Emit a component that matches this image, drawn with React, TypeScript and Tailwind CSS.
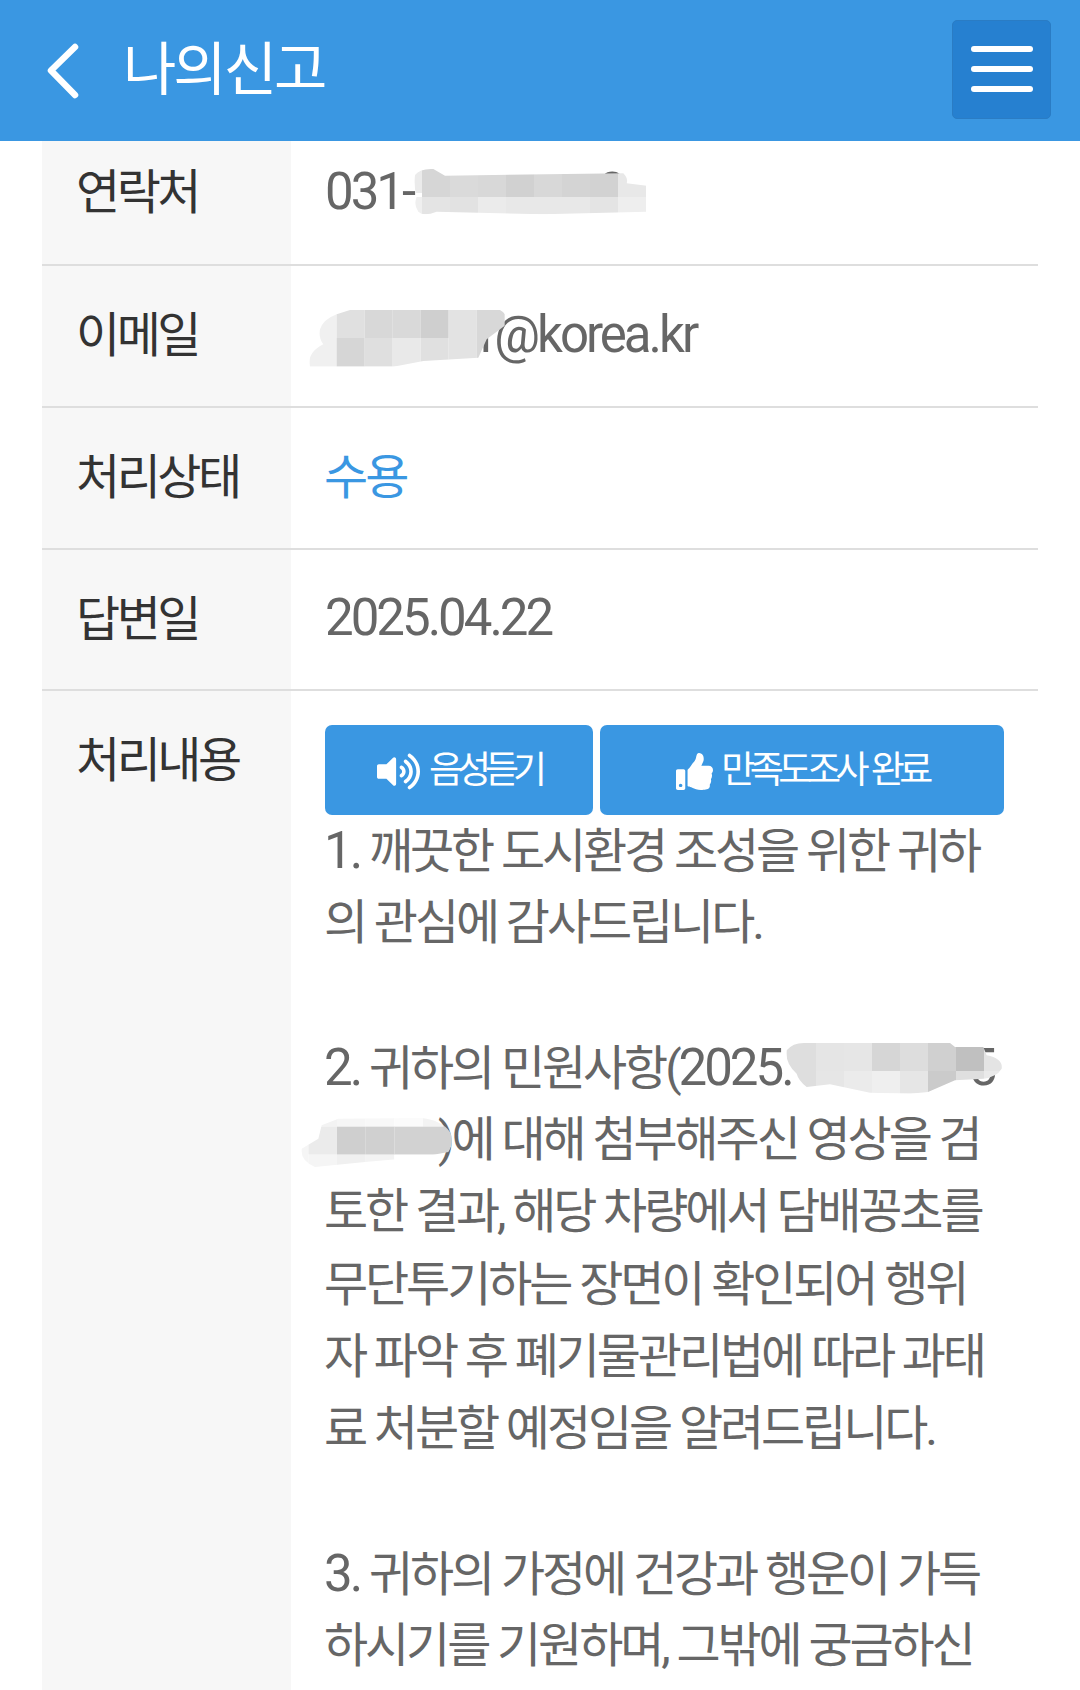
import type { ReactNode } from "react";
import { FaThumbsUp, FaVolumeUp } from "react-icons/fa";

const FONT = "font-['Roboto','Noto_Sans_CJK_KR',sans-serif]";

type Cell = [number, number, number, number, string];

/** Hand-blurred patch that sits over private details. Coordinates are in 1/3 px. */
function Smear({ id, className, w, h, clip, cells }: { id: string; className: string; w: number; h: number; clip: string; cells: Cell[] }) {
  return (
    <svg className={`absolute ${className}`} width={w} height={h} viewBox={`0 0 ${w * 3} ${h * 3}`}>
      <clipPath id={id}>
        <path d={clip} />
      </clipPath>
      <g clipPath={`url(#${id})`}>
        {cells.map(([x, y, cw, ch, fill]) => (
          <rect key={`${x}-${y}`} x={x} y={y} width={cw} height={ch} fill={fill} />
        ))}
      </g>
    </svg>
  );
}

function row(y: number, h: number, x0: number, w: number, colors: string[]): Cell[] {
  return colors.map((c, i) => [x0 + i * w, y, w, h, c] as Cell);
}

function Num({ children }: { children: ReactNode }) {
  return <span className="text-[51px] tracking-[-3px]">{children}</span>;
}

function InfoRow({ label, children, className = "" }: { label: string; children: ReactNode; className?: string }) {
  return (
    <div className={`flex border-b-2 border-[#dedede] ${className}`}>
      <div className="flex w-[249px] shrink-0 items-center bg-[#f7f7f7] pl-[34px] text-[48px] tracking-[-3.5px] text-[#333]">
        {label}
      </div>
      <div className="relative flex flex-1 items-center pl-[34px] text-[48px] tracking-[-3px] text-[#666]">{children}</div>
    </div>
  );
}

const BODY_LINES: ReactNode[] = [
  <><Num>1.</Num> 깨끗한 도시환경 조성을 위한 귀하</>,
  "의 관심에 감사드립니다.",
  "",
  <>
    <Num>2.</Num> 귀하의 민원사항(<Num>2025.</Num>
    <span className="inline-block w-[177px]" />
    <Num>5</Num>
  </>,
  <span className="pl-[114px]">)에 대해 첨부해주신 영상을 검</span>,
  "토한 결과, 해당 차량에서 담배꽁초를",
  "무단투기하는 장면이 확인되어 행위",
  "자 파악 후 폐기물관리법에 따라 과태",
  "료 처분할 예정임을 알려드립니다.",
  "",
  <><Num>3.</Num> 귀하의 가정에 건강과 행운이 가득</>,
  "하시기를 기원하며, 그밖에 궁금하신",
];

export default function App() {
  return (
    <div className={`flex h-[1690px] w-[1080px] flex-col overflow-hidden bg-white ${FONT}`}>
      <header className="flex h-[141px] shrink-0 items-center bg-[#3a97e2]">
        <svg className="ml-[46px]" width="34" height="56" viewBox="0 0 34 56" fill="none">
          <path d="M29 4 L5 27.5 L29 52" stroke="white" strokeWidth="6.5" strokeLinecap="round" strokeLinejoin="round" />
        </svg>
        <h1 className="mb-[2px] ml-[43px] text-[58px] leading-none tracking-[-3px] text-white">나의신고</h1>
        <button className="mb-[3px] ml-auto mr-[29px] flex h-[99px] w-[99px] flex-col items-center justify-center gap-[14px] rounded-[5px] border border-[#2a7cc4] bg-[#2680d0]">
          <span className="h-[6px] w-[62px] rounded-full bg-white" />
          <span className="h-[6px] w-[62px] rounded-full bg-white" />
          <span className="h-[6px] w-[62px] rounded-full bg-white" />
        </button>
      </header>

      <div className="mx-[42px] flex flex-1 flex-col">
        <InfoRow label="연락처" className="h-[125px] [&>div]:pb-[20px]">
          <Num>031-</Num>
          <span className="inline-block w-[185px]" />
          <Num>0</Num>
          <Smear
            id="s1"
            className="left-[19px] top-[14px]"
            w={350}
            h={70}
            clip="M315 60 Q330 40 370 42 L405 62 L940 55 Q955 70 950 85 L1010 92 L1010 170 L700 178 L380 170 Q340 185 325 170 Q310 150 320 125 Q310 90 315 60Z"
            cells={[
              [300, 30, 36, 84, "#ebebeb"],
              [300, 126, 36, 60, "#efefef"],
              ...row(42, 84, 336, 84, ["#d6d6d6", "#dadada", "#d8d8d8", "#d1d1d1", "#d8d8d8", "#d4d4d4", "#d2d2d2", "#e8e8e8"]),
              ...row(126, 60, 336, 84, ["#e4e4e4", "#e2e2e2", "#ebebeb", "#e8e8e8", "#e8e8e8", "#e8e8e8", "#e4e4e4", "#eeeeee"]),
            ]}
          />
        </InfoRow>
        <InfoRow label="이메일" className="h-[142px] [&>div:last-child]:pb-[2px]">
          <span className="pl-[155px]"><Num>r@korea.kr</Num></span>
          <Smear
            id="s2"
            className="left-[9px] top-[30px]"
            w={240}
            h={80}
            clip="M60 100 Q70 70 110 55 L150 42 L600 42 Q625 55 620 85 L560 130 L535 185 L370 195 L280 212 L30 212 Q20 170 70 145 Q55 125 60 100Z"
            cells={[
              [20, 42, 90, 84, "#f0f0f0"],
              [20, 126, 90, 86, "#f0f0f0"],
              ...row(42, 84, 110, 84, ["#e0e0e0", "#d8d8d8", "#d9d9d9", "#cfcfcf", "#e3e3e3", "#d8d8d8"]),
              ...row(126, 86, 110, 84, ["#d6d6d6", "#dfdfdf", "#e9e9e9", "#e0e0e0", "#e3e3e3", "#d8d8d8"]),
            ]}
          />
        </InfoRow>
        <InfoRow label="처리상태" className="h-[142px] [&>div:last-child]:pl-[33px]">
          <span className="text-[#3a97e2]">수용</span>
        </InfoRow>
        <InfoRow label="답변일" className="h-[141px] [&>div:last-child]:pb-[2px]">
          <Num>2025.04.22</Num>
        </InfoRow>

        <div className="flex flex-1">
          <div className="w-[249px] shrink-0 bg-[#f7f7f7] pl-[34px] pt-[37px] text-[48px] leading-[66px] tracking-[-3.5px] text-[#333]">처리내용</div>
          <div className="relative flex-1 pl-[33px] pt-[34px] text-[48px] leading-[72.4px] tracking-[-3.1px] text-[#666]">
            <div className="ml-[1px] flex gap-[7px] text-white">
              <button className="flex h-[90px] w-[268px] items-center justify-center gap-[9px] rounded-[7px] bg-[#3a97e2] pt-[3px] text-[37px] tracking-[-6px]">
                <FaVolumeUp size={43} />
                음성듣기
              </button>
              <button className="flex h-[90px] w-[404px] items-center justify-center gap-[8px] rounded-[7px] bg-[#3a97e2] pt-[3px] text-[37px] tracking-[-5.5px] [word-spacing:3px]">
                <FaThumbsUp size={37} />
                만족도조사 완료
              </button>
            </div>
            {BODY_LINES.map((line, i) => (
              <div key={i} className="-mt-[0.09px] h-[72.4px] whitespace-nowrap">
                {line}
              </div>
            ))}
            <Smear
              id="s3"
              className="left-[479px] top-[336px]"
              w={240}
              h={70}
              clip="M50 70 Q70 45 110 48 L540 48 L555 60 L640 60 L650 85 Q700 95 695 125 Q680 150 640 155 L555 160 L474 195 L420 200 L300 197 L180 172 L110 180 Q85 160 80 140 Q45 110 50 70Z"
              cells={[
                ...row(48, 84, 54, 84, ["#dedede", "#e5e5e5", "#e6e6e6", "#d6d6d6", "#dddddd", "#d0d0d0", "#c0c0c0", "#e4e4e4"]),
                ...row(132, 68, 54, 84, ["#dedede", "#e6e6e6", "#ebebeb", "#efefef", "#e6e6e6", "#cbcbcb", "#dfdfdf", "#eaeaea"]),
                [40, 48, 14, 152, "#dedede"],
              ]}
            />
            <Smear
              id="s4"
              className="left-[4px] top-[411px]"
              w={180}
              h={70}
              clip="M80 70 L130 50 L380 48 Q440 55 465 90 Q480 120 460 150 L380 165 L210 180 L60 195 Q15 175 20 140 L70 110Z"
              cells={[
                ...row(40, 34, 40, 86, ["#f3f3f3", "#f6f6f6", "#f8f8f8", "#fbfbfb", "#f3f3f3"]),
                ...row(74, 84, 40, 86, ["#ebebeb", "#cfcfcf", "#d0d0d0", "#d2d2d2", "#d2d2d2"]),
                ...row(158, 40, 40, 86, ["#f5f5f5", "#f0f0f0", "#f3f3f3", "#ffffff", "#ffffff"]),
                [10, 74, 30, 124, "#f5f5f5"],
              ]}
            />
          </div>
        </div>
      </div>
    </div>
  );
}
